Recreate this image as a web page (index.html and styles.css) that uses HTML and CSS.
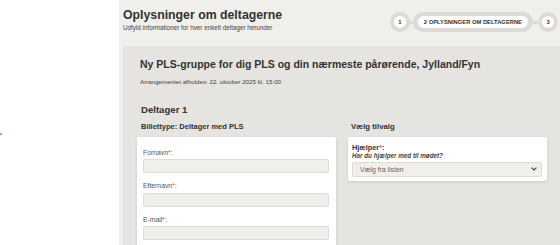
FILE: index.html
```html
<!DOCTYPE html>
<html lang="da">
<head>
<meta charset="utf-8">
<title>Oplysninger om deltagerne</title>
<link rel="stylesheet" href="styles.css">
</head>
<body>
<div class="layout">
  <aside class="side"><span class="side-mark"></span></aside>
  <main class="main">
    <header class="head">
      <div class="head-text">
        <h1 class="title">Oplysninger om deltagerne</h1>
        <p class="subtitle">Udfyld informationer for hver enkelt deltager herunder</p>
      </div>
      <ol class="steps">
        <li class="step"><span class="step-in">1</span></li>
        <li class="step-line"></li>
        <li class="step step-wide"><span class="step-in">2 OPLYSNINGER OM DELTAGERNE</span></li>
        <li class="step-line"></li>
        <li class="step"><span class="step-in">3</span></li>
      </ol>
    </header>
    <section class="card">
      <div class="event">
        <h2 class="event-title">Ny PLS-gruppe for dig PLS og din nærmeste pårørende, Jylland/Fyn</h2>
        <p class="event-date">Arrangementet afholdes: 22. oktober 2025 kl. 15:00</p>
      </div>
      <h3 class="person">Deltager 1</h3>
      <div class="cols">
        <div class="col">
          <h4 class="col-head">Billettype: Deltager med PLS</h4>
          <div class="box">
            <label class="field"><span class="lbl">Fornavn<i class="req">*</i>:</span><span class="input"></span></label>
            <label class="field"><span class="lbl">Efternavn<i class="req">*</i>:</span><span class="input"></span></label>
            <label class="field"><span class="lbl">E-mail<i class="req">*</i>:</span><span class="input"></span></label>
          </div>
        </div>
        <div class="col">
          <h4 class="col-head col-head-r">Vælg tilvalg</h4>
          <div class="box box-opt">
            <div class="opt-lbl">Hjælper<i class="req">*</i>:</div>
            <div class="opt-q">Har du hjælper med til mødet?</div>
            <div class="select"><span>Vælg fra listen</span>
              <svg class="chev" width="6" height="4" viewBox="0 0 6 4"><path d="M0.6 0.6 L3 3 L5.4 0.6" fill="none" stroke="#444" stroke-width="1.2"/></svg>
            </div>
          </div>
        </div>
      </div>
    </section>
  </main>
</div>
</body>
</html>
```
FILE: styles.css
```css
* { box-sizing: border-box; }
html, body { margin: 0; padding: 0; }
body {
  font-family: "Liberation Sans", Arial, sans-serif;
  color: #333;
  background: #fff;
  width: 560px;
  height: 245px;
  overflow: hidden;
}
.layout { display: flex; height: 245px; }
.side { width: 119px; flex: none; background: #fff; padding-top: 133px; }
.side-mark { display: block; width: 2px; height: 2px; background: #f08a8a; }
.main {
  flex: 1;
  background: #f0efec;
  padding-left: 4px;
  display: flex;
  flex-direction: column;
  min-width: 0;
}
.head {
  flex: none;
  display: flex;
  justify-content: space-between;
  align-items: flex-start;
  height: 46px;
}
.head-text { padding-top: 8px; }
.title {
  margin: 0;
  font-size: 12.3px;
  line-height: 14px;
  font-weight: bold;
  color: #333;
}
.subtitle {
  margin: 2px 0 0;
  font-size: 6.3px;
  line-height: 8px;
  color: #444;
}
.steps {
  list-style: none;
  margin: 12px 2px 0 0;
  padding: 0;
  display: flex;
  align-items: center;
}
.step {
  background: #dddbd7;
  border-radius: 10px;
  padding: 4px;
  display: flex;
}
.step-in {
  background: #fff;
  border-radius: 6px;
  min-width: 12px;
  height: 12px;
  font-size: 5.8px;
  font-weight: bold;
  color: #333;
  display: flex;
  align-items: center;
  justify-content: center;
}
.step-wide { padding: 4px 5px; }
.step-wide .step-in { padding: 0 6px; }
.step-line { width: 3px; height: 3px; background: #dddbd7; }
.step-line:nth-child(4) { width: 5px; }
.card {
  flex: 1;
  background: #e5e4e0;
  padding: 12px 0 0 14px;
}
.event { padding-left: 3px; }
.event-title {
  margin: 0;
  font-size: 10.5px;
  line-height: 12px;
  font-weight: bold;
  color: #333;
}
.event-date {
  margin: 8px 0 0;
  font-size: 6.2px;
  line-height: 8px;
  color: #444;
}
.person {
  margin: 18px 0 0 4px;
  font-size: 9.6px;
  line-height: 12px;
  font-weight: bold;
  color: #333;
}
.cols {
  margin-top: 6px;
  display: grid;
  grid-template-columns: 199px 199px;
  column-gap: 12px;
}
.col { min-width: 0; }
.col-head {
  margin: 0 0 5px 4px;
  font-size: 7.5px;
  line-height: 10px;
  font-weight: bold;
  color: #333;
}
.col-head-r { margin-left: 3px; font-size: 7.8px; }
.box {
  background: #fff;
  border-radius: 2px;
  box-shadow: 0 1px 3px rgba(0,0,0,0.12);
  padding: 11.5px 7px 8px 6px;
}
.field { display: block; margin-bottom: 9px; }
.lbl {
  display: block;
  font-size: 6.8px;
  line-height: 8px;
  color: #555;
  margin-bottom: 2.5px;
}
.req { font-style: normal; color: #d9534f; }
.input {
  display: block;
  height: 14px;
  background: #f0efec;
  border: 1px solid #dedcd8;
  border-radius: 2px;
}
.box-opt { padding: 5.5px 5px 4px 4px; }
.opt-lbl {
  font-size: 7.3px;
  line-height: 9px;
  font-weight: bold;
  color: #333;
}
.opt-q {
  font-size: 6.3px;
  line-height: 8px;
  font-weight: bold;
  font-style: italic;
  color: #444;
}
.select {
  margin-top: 2px;
  height: 15px;
  background: #f0efec;
  border: 1px solid #dedcd8;
  border-radius: 2px;
  display: flex;
  align-items: center;
  justify-content: space-between;
  padding: 0 4px 0 7px;
  font-size: 6.8px;
  color: #666;
}
.chev { display: block; }
```
